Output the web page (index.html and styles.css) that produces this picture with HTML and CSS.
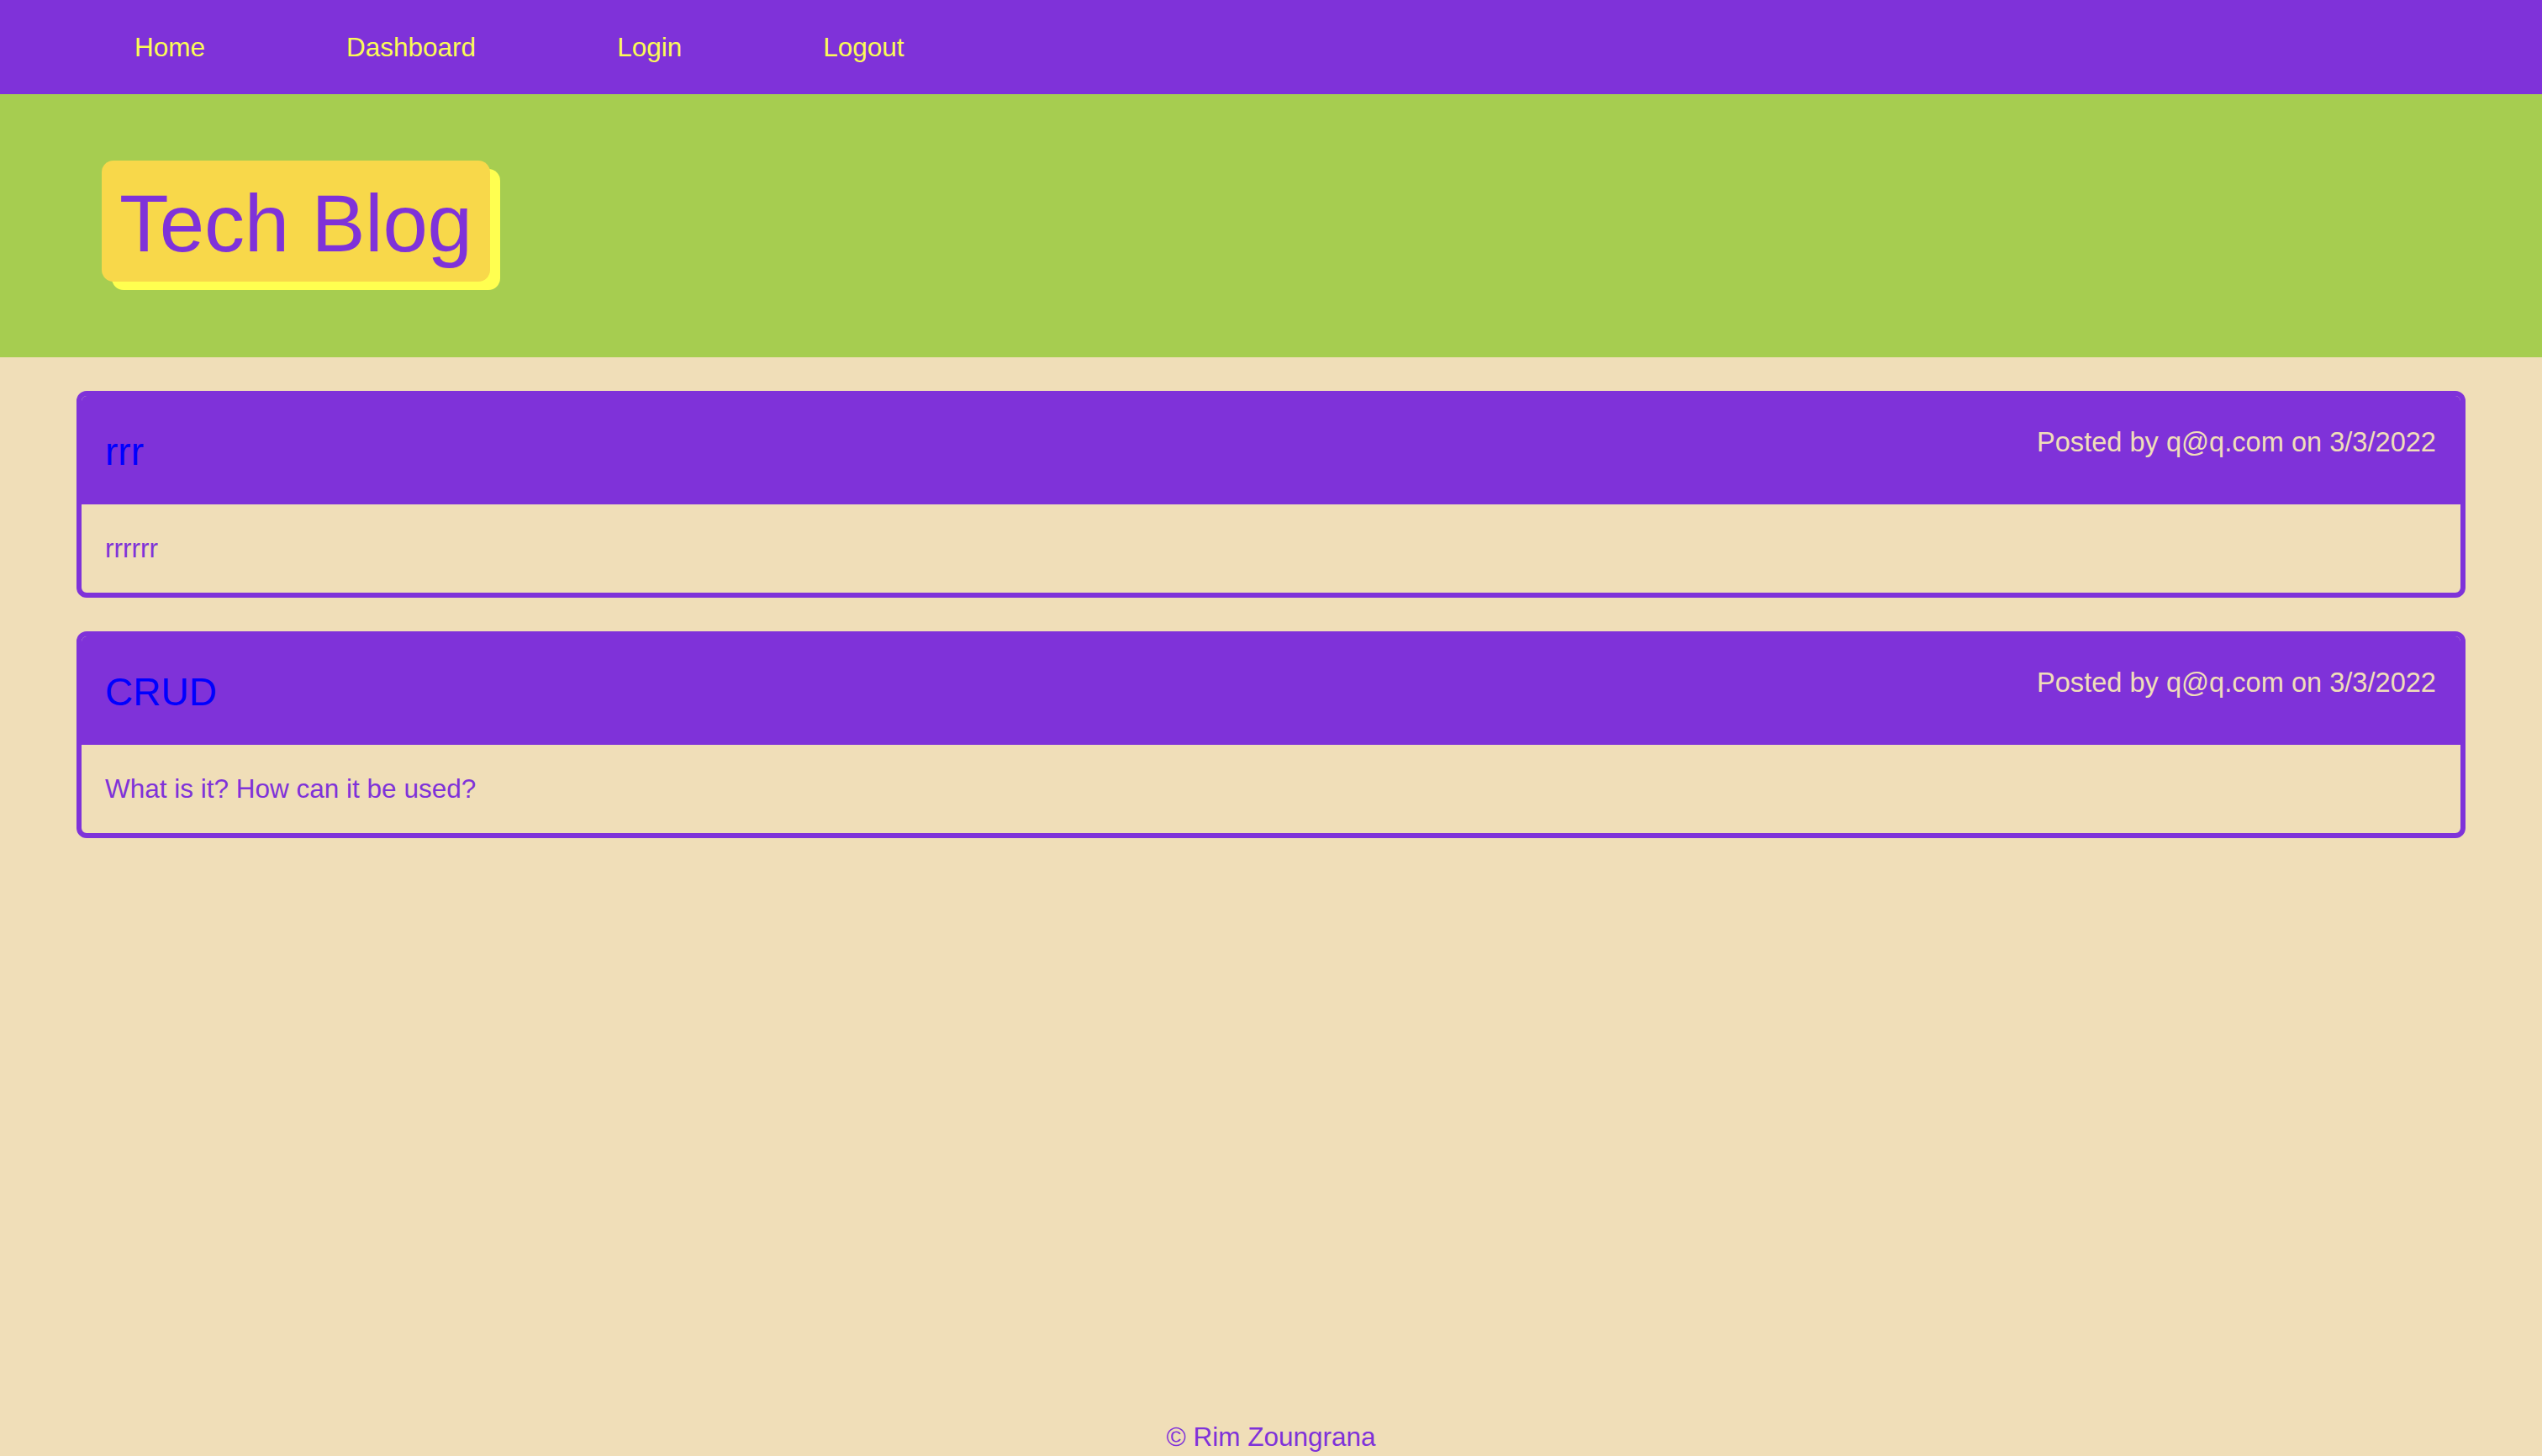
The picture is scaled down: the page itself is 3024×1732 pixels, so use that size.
FILE: index.html
```html
<!DOCTYPE html>
<html lang="en">
<head>
<meta charset="utf-8">
<title>Tech Blog</title>
<link rel="stylesheet" href="styles.css">
</head>
<body>
<nav class="nav">
  <a class="nav-link" href="#">Home</a>
  <a class="nav-link" href="#">Dashboard</a>
  <a class="nav-link" href="#">Login</a>
  <a class="nav-link" href="#">Logout</a>
</nav>
<header class="hero">
  <h1 class="logo">Tech Blog</h1>
</header>
<main class="posts">
  <article class="card">
    <div class="card-head">
      <a class="card-title" href="#">rrr</a>
      <span class="card-meta">Posted by q@q.com on 3/3/2022</span>
    </div>
    <div class="card-body">rrrrrr</div>
  </article>
  <article class="card">
    <div class="card-head">
      <a class="card-title" href="#">CRUD</a>
      <span class="card-meta">Posted by q@q.com on 3/3/2022</span>
    </div>
    <div class="card-body">What is it? How can it be used?</div>
  </article>
</main>
<footer class="footer">© Rim Zoungrana</footer>
</body>
</html>
```
FILE: styles.css
```css
* { box-sizing: border-box; }
html, body { margin: 0; padding: 0; }
body {
  background: #f0deb8;
  font-family: "Liberation Sans", Arial, sans-serif;
  color: #7f32d9;
  min-height: 100vh;
  display: flex;
  flex-direction: column;
}
.nav {
  background: #7f32d9;
  height: 112px;
  display: flex;
  align-items: center;
  gap: 168px;
  padding-left: 160px;
}
.nav-link {
  color: #fbfb55;
  text-decoration: none;
  font-size: 31.5px;
  line-height: 44px;
}
.hero {
  background: #a6cd50;
  height: 313px;
  padding: 79px 0 0 121px;
}
.logo {
  display: inline-block;
  margin: 0;
  background: #f8d84a;
  color: #7f32d9;
  font-weight: 400;
  font-size: 96px;
  letter-spacing: -0.2px;
  line-height: 110px;
  padding: 20px 21px 14px 21px;
  border-radius: 14px;
  box-shadow: 12px 10px 0 #ffff50;
}
.posts {
  padding: 40px 91px 0 91px;
  display: flex;
  flex-direction: column;
  gap: 40px;
}
.card {
  border: 6px solid #7f32d9;
  border-radius: 12px;
  overflow: hidden;
}
.card-head {
  background: #7f32d9;
  display: flex;
  justify-content: space-between;
  align-items: flex-start;
  padding: 33px 29px 32px 28px;
}
.card-title {
  color: #0000ff;
  text-decoration: none;
  font-size: 46px;
  line-height: 62px;
  margin-top: 2px;
}
.card-meta {
  color: #f0deb8;
  font-size: 32.6px;
  line-height: 44px;
}
.card-body {
  padding: 30px 30px 31px 28px;
  font-size: 31.5px;
  line-height: 44px;
  color: #7f32d9;
}
.footer {
  margin-top: auto;
  text-align: center;
  font-size: 31.5px;
  line-height: 44px;
  color: #7f32d9;
  padding-bottom: 1px;
}
```
